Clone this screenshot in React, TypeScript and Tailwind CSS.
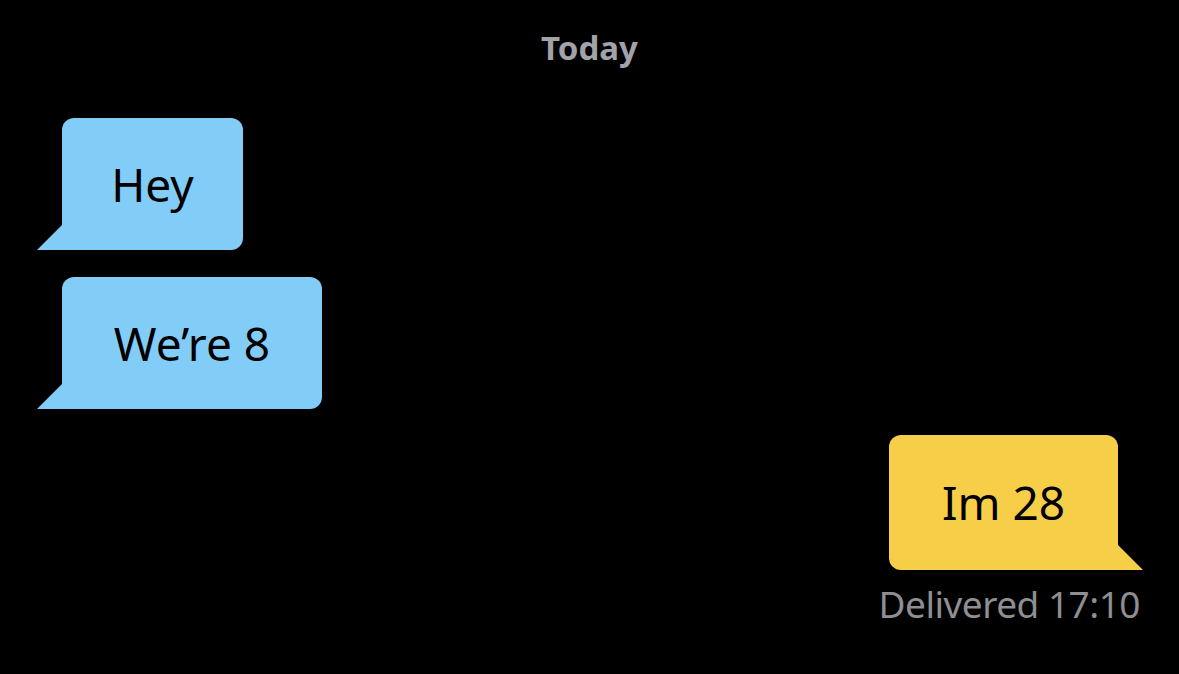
import type { ReactNode } from "react";

const font = { fontFamily: '"Noto Sans", "Open Sans", sans-serif' };

function TailLeft() {
  return (
    <svg width="25" height="25" viewBox="0 0 25 25" className="block shrink-0">
      <polygon points="25,0 0,25 25,25" fill="#82cdf8" />
    </svg>
  );
}

function TailRight() {
  return (
    <svg width="25" height="25" viewBox="0 0 25 25" className="block shrink-0">
      <polygon points="0,0 25,25 0,25" fill="#f7ce48" />
    </svg>
  );
}

function Incoming({ width, children }: { width: string; children: ReactNode }) {
  return (
    <div className="flex items-end">
      <TailLeft />
      <div
        className={`${width} h-[132px] flex items-center justify-center rounded-[12px] rounded-bl-none bg-[#82cdf8] text-[46px] text-black`}
      >
        {children}
      </div>
    </div>
  );
}

export default function App() {
  return (
    <div className="w-[1179px] h-[674px] bg-black overflow-hidden" style={font}>
      <div className="pt-[28px] text-center text-[33px] font-bold text-[#a2a2a9] leading-[40px]">
        Today
      </div>

      <div className="mt-[50px] pl-[37px] flex flex-col gap-[27px]">
        <Incoming width="w-[181px]">Hey</Incoming>
        <Incoming width="w-[260px]">We’re 8</Incoming>
      </div>

      <div className="mt-[26px] pr-[36px] flex flex-col items-end">
        <div className="flex items-end">
          <div className="w-[229px] h-[135px] flex items-center justify-center rounded-[12px] rounded-br-none bg-[#f7ce48] text-[46px] text-black">
            Im 28
          </div>
          <TailRight />
        </div>
        <div className="mt-[12px] mr-[3px] text-[37px] leading-[44px] tracking-[-0.5px] text-[#8e8e93]">
          Delivered 17:10
        </div>
      </div>
    </div>
  );
}
